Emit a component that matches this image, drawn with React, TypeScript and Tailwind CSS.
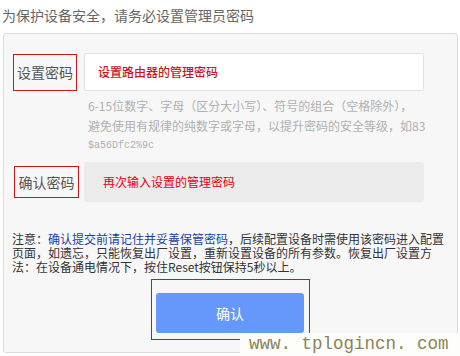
export default function App() {
  const font = { fontFamily: '"Noto Sans CJK SC", "Noto Sans", sans-serif' }

  return (
    <div className="relative h-[356px] w-[460px] overflow-hidden bg-white" style={font}>
      <div className="pl-[2px] pt-[5px] text-[14px] leading-[20px] text-[#666]">为保护设备安全，请务必设置管理员密码</div>

      <div className="ml-[3px] mt-[8px] h-[320px] w-[455px] rounded-[3px] border border-[#dcdcdc] bg-[#f7f7f7]">
        <div className="ml-[9px] mt-[19px] flex items-center">
          <div className="flex h-[37px] w-[64px] items-center justify-center border border-[#c8161d] text-[14px] text-[#555]">
            设置密码
          </div>
          <div className="ml-[7px] flex h-[38px] w-[340px] items-center rounded-[2px] border border-[#e2e2e2] bg-white pl-[13px] text-[12px] font-medium text-[#c8161d]">
            设置路由器的管理密码
          </div>
        </div>

        <div className="ml-[84px] mt-[5px] whitespace-nowrap text-[12px] leading-[20px] text-[#b0b0b0]">
          <div>6-15位数字、字母（区分大小写）、符号的组合（空格除外），</div>
          <div>避免使用有规律的纯数字或字母，以提升密码的安全等级，如83</div>
          <div className="text-[10px]" style={{ fontFamily: '"Liberation Mono", monospace' }}>
            $a56Dfc2%9c
          </div>
        </div>

        <div className="ml-[10px] mt-[6px] flex items-center">
          <div className="flex h-[32px] w-[65px] items-center justify-center border border-[#c8161d] text-[14px] text-[#555]">
            确认密码
          </div>
          <div className="ml-[5px] flex h-[40px] w-[340px] items-center rounded-[3px] bg-[#ebebeb] pl-[19px] text-[12px] text-[#e60012]">
            再次输入设置的管理密码
          </div>
        </div>

        <div className="ml-[8px] mt-[30px] whitespace-nowrap text-[12px] leading-[14px] text-[#333]">
          <div>
            注意：<span className="text-[#1e3f9e]">确认提交前请记住并妥善保管密码</span>，后续配置设备时需使用该密码进入配置
          </div>
          <div>页面，如遗忘，只能恢复出厂设置，重新设置设备的所有参数。恢复出厂设置方</div>
          <div>法：在设备通电情况下，按住Reset按钮保持5秒以上。</div>
        </div>

        <div className="mt-[5px] flex justify-center">
          <div className="h-[61px] w-[159px] border border-[#c8161d] pl-[4px] pt-[13px]">
            <button className="flex h-[40px] w-[148px] items-center justify-center rounded-[3px] bg-[#6697fa] text-[14px] text-white">
              确认
            </button>
          </div>
        </div>
      </div>

      <div
        className="absolute bottom-0 right-0 flex h-[23px] w-[220px] items-center bg-[#fdfdfb] pl-[9px] text-[17.5px] text-[#8b8455]"
        style={{ fontFamily: '"Liberation Mono", monospace' }}
      >
        www. tplogincn. com
      </div>
    </div>
  )
}
